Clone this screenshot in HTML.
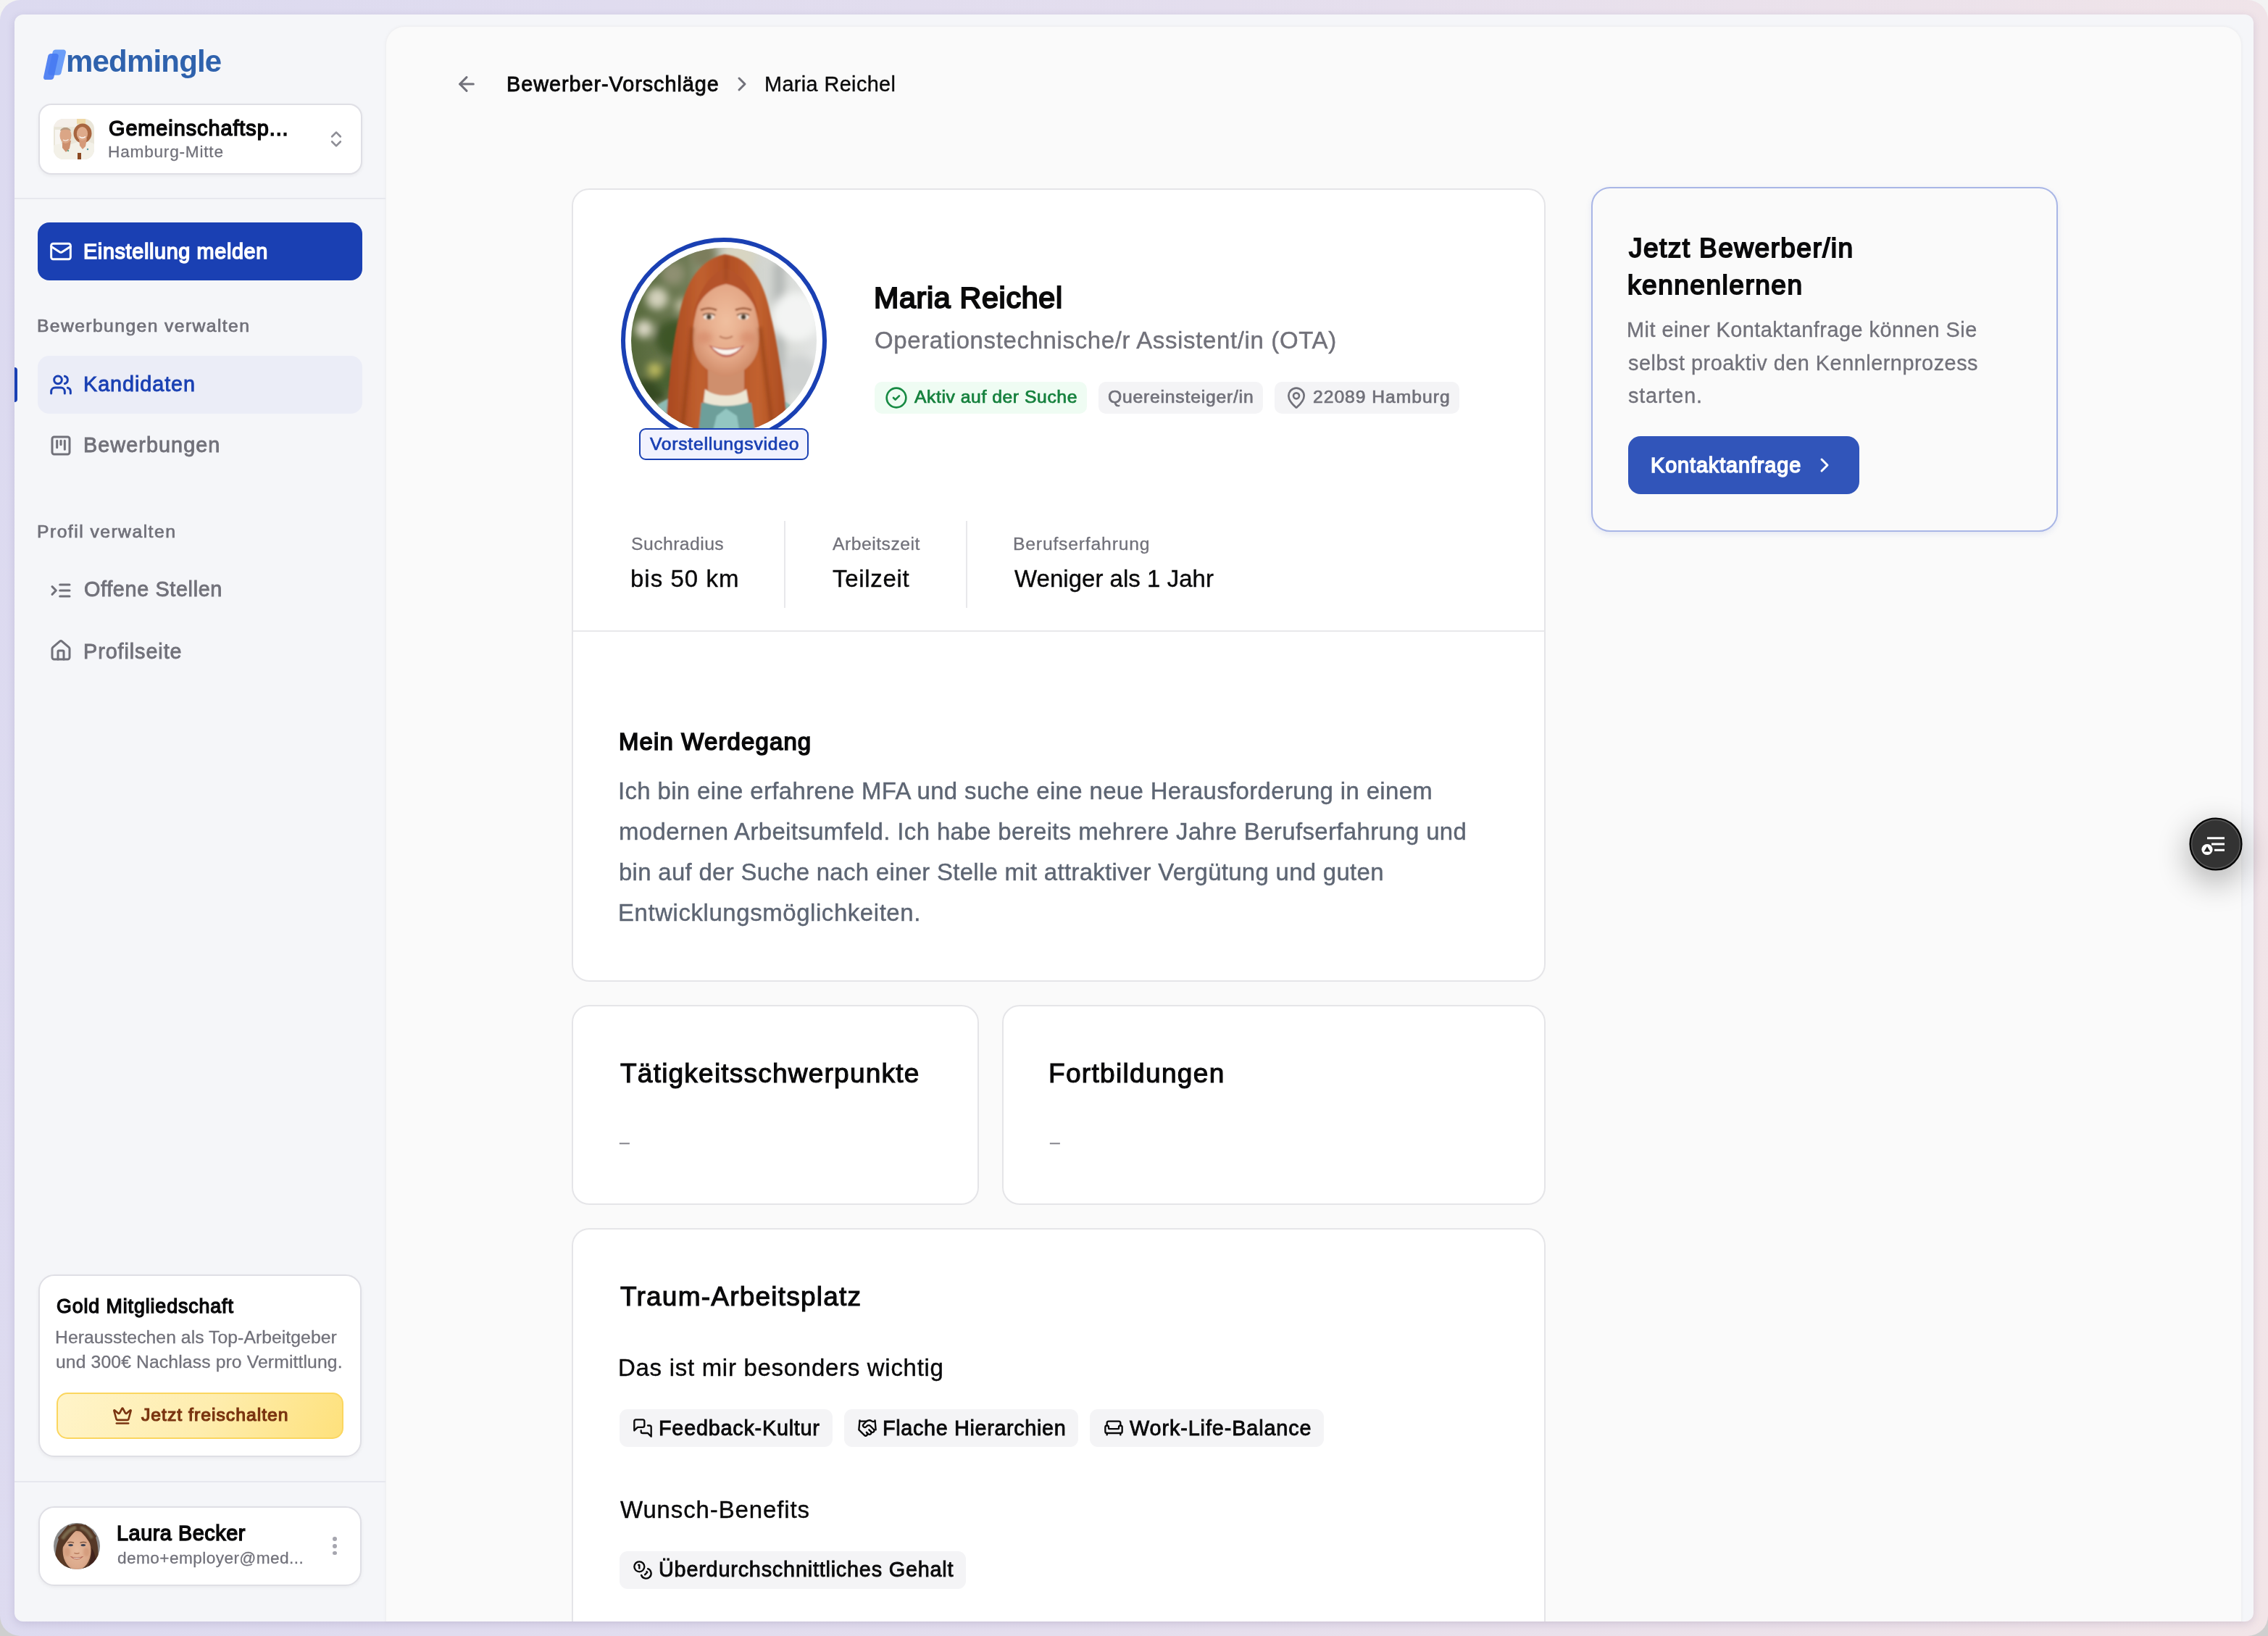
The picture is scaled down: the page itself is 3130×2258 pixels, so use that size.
<!DOCTYPE html><html lang="de"><head><meta charset="utf-8"><title>medmingle – Maria Reichel</title><style>
html,body{margin:0;padding:0}
html{overflow:hidden}
html{background:linear-gradient(180deg,#f3f3f3,#cfcfcf)}
body{width:3130px;height:2258px;position:relative;overflow:hidden;font-family:"Liberation Sans", Arial, sans-serif;
 background:linear-gradient(96deg,#dcdaf0 0%,#e4deee 50%,#f2e5e8 100%);border-radius:28px}
.b,.i,.t{position:absolute;box-sizing:border-box}
.t{white-space:nowrap;line-height:1;display:block;will-change:transform}
.i{display:block;overflow:visible}
</style></head><body>
<div class="b" style="left:20px;top:20px;width:3090px;height:2218px;background:#f5f6f9;border-radius:12px;box-shadow:0 3px 12px 0 rgba(60,50,110,.15);overflow:hidden"></div>
<div class="b" style="left:532px;top:36px;width:2562px;height:2202px;background:#fafafa;border-radius:26px 26px 0 0;box-shadow:0 0 5px rgba(0,0,0,.04);border:1px solid #f0f0f2;border-bottom:none"></div>
<svg class="i" style="left:58px;top:66px" width="36" height="48" viewBox="0 0 36 48"><path d="M19 2.500h10.500a3.500 3.500 0 0 1 3.400 4.300l-6.300 27.500a4.500 4.500 0 0 1-4.400 3.500H11.700a3.500 3.500 0 0 1-3.400-4.300L14.600 6a4.500 4.500 0 0 1 4.400-3.500z" fill="#6b9df8"/><path d="M12.500 8h7a3.300 3.300 0 0 1 3.200 4.100l-6.300 28.500a4.500 4.500 0 0 1-4.400 3.500H5.200a3.200 3.200 0 0 1-3.100-3.900L8.200 11.500a4.500 4.500 0 0 1 4.300-3.500z" fill="#4679f1" opacity=".92"/></svg>
<span class="t" style="left:90.6px;top:64.4px;font-size:42.00px;color:#2f62ad;font-weight:700;letter-spacing:-0.814px;">medmingle</span>
<div class="b" style="left:53px;top:143px;width:447px;height:98px;background:#fff;border:2px solid #dfdfe5;border-radius:18px;box-shadow:0 2px 5px rgba(0,0,0,.05)"></div>
<svg class="i" style="left:74px;top:164px" width="56" height="56" viewBox="0 0 56 56">
<defs><clipPath id="pc"><rect width="56" height="56" rx="14"/></clipPath><filter id="pb"><feGaussianBlur stdDeviation=".7"/></filter></defs>
<g clip-path="url(#pc)"><rect width="56" height="56" fill="#eae6d9"/>
<g filter="url(#pb)">
<rect x="0" y="0" width="32" height="11" fill="#f4efe9"/><rect x="2" y="15" width="8" height="22" fill="#f7f5f1"/><rect x="32" y="0" width="12" height="7" fill="#efd9a8"/>
<path d="M-2 58V38C4 34 12 33 19 37L30 33C38 30 50 30 58 36V58Z" fill="#f3f1e8"/>
<ellipse cx="40" cy="20" rx="12.500" ry="13.500" fill="#a8653f"/>
<path d="M35 27H46L44 38L40 42L36 37Z" fill="#d59a79"/>
<ellipse cx="39.500" cy="20.500" rx="7.600" ry="9.600" fill="#deaa8b"/>
<path d="M12 30H24L22 41L17 46L12 40Z" fill="#cc8f6e"/>
<ellipse cx="16.500" cy="23" rx="8" ry="11" fill="#dba686"/>
<path d="M9 17C10 11 22 10 24 17C20 14 13 14 9 17Z" fill="#b79a80"/>
<path d="M35.500 24.500Q39.500 28 44 24.500" stroke="#fff" stroke-width="1.400" fill="none"/>
<path d="M13 29Q17 31.500 20.500 28.500" stroke="#f6ece6" stroke-width="1.200" fill="none"/>
<rect x="33" y="47" width="5" height="10" fill="#8b4a20"/>
<circle cx="20" cy="44" r="1.200" fill="#6aa88a"/><circle cx="47" cy="42" r="1.200" fill="#5a9aa0"/>
</g></g></svg>
<span class="t" style="left:150.0px;top:163.0px;font-size:28.84px;color:#0a0a0b;-webkit-text-stroke:1.44px #0a0a0b;letter-spacing:0.956px;">Gemeinschaftsp...</span>
<span class="t" style="left:149.0px;top:197.5px;font-size:22.66px;color:#71717a;-webkit-text-stroke:0.27px #71717a;letter-spacing:0.764px;">Hamburg-Mitte</span>
<svg class="i" style="left:450px;top:178px" width="28" height="28" viewBox="0 0 24 24" fill="none" stroke="#8e8e96" stroke-width="2.25" stroke-linecap="round" stroke-linejoin="round"><path d="m7 15 5 5 5-5"/><path d="m7 9 5-5 5 5"/></svg>
<div class="b" style="left:20px;top:273px;width:512px;height:2px;background:#e7e8ee"></div>
<div class="b" style="left:52px;top:307px;width:448px;height:80px;background:#1a40b3;border-radius:16px"></div>
<svg class="i" style="left:68px;top:331px" width="32" height="32" viewBox="0 0 24 24" fill="none" stroke="#fff" stroke-width="2.2" stroke-linecap="round" stroke-linejoin="round"><rect width="20" height="16" x="2" y="4" rx="2"/><path d="m22 7-8.97 5.7a1.94 1.94 0 0 1-2.06 0L2 7"/></svg>
<span class="t" style="left:115.0px;top:333.1px;font-size:28.84px;color:#fff;-webkit-text-stroke:1.44px #fff;letter-spacing:0.630px;">Einstellung melden</span>
<span class="t" style="left:51.2px;top:437.9px;font-size:24.72px;color:#71717a;-webkit-text-stroke:0.74px #71717a;letter-spacing:1.384px;">Bewerbungen verwalten</span>
<div class="b" style="left:52px;top:491px;width:448px;height:80px;background:#ebedf7;border-radius:16px"></div>
<div class="b" style="left:20px;top:507px;width:4px;height:48px;background:#1a40b3;border-radius:0 4px 4px 0"></div>
<svg class="i" style="left:68px;top:515px" width="32" height="32" viewBox="0 0 24 24" fill="none" stroke="#1a40b3" stroke-width="2.25" stroke-linecap="round" stroke-linejoin="round"><path d="M16 21v-2a4 4 0 0 0-4-4H6a4 4 0 0 0-4 4v2"/><circle cx="9" cy="7" r="4"/><path d="M22 21v-2a4 4 0 0 0-3-3.87"/><path d="M16 3.13a4 4 0 0 1 0 7.75"/></svg>
<span class="t" style="left:114.7px;top:516.0px;font-size:28.84px;color:#1a40b3;-webkit-text-stroke:0.87px #1a40b3;letter-spacing:0.911px;">Kandidaten</span>
<svg class="i" style="left:68px;top:599px" width="32" height="32" viewBox="0 0 24 24" fill="none" stroke="#71717a" stroke-width="2.25" stroke-linecap="round" stroke-linejoin="round"><rect width="18" height="18" x="3" y="3" rx="2"/><path d="M8 7v7"/><path d="M12 7v4"/><path d="M16 7v9"/></svg>
<span class="t" style="left:114.7px;top:600.1px;font-size:28.84px;color:#71717a;-webkit-text-stroke:0.87px #71717a;letter-spacing:1.045px;">Bewerbungen</span>
<span class="t" style="left:50.8px;top:722.1px;font-size:24.72px;color:#71717a;-webkit-text-stroke:0.74px #71717a;letter-spacing:1.460px;">Profil verwalten</span>
<svg class="i" style="left:68px;top:798.6px" width="32" height="32" viewBox="0 0 24 24" fill="none" stroke="#71717a" stroke-width="2.25" stroke-linecap="round" stroke-linejoin="round"><path d="M21 12H11"/><path d="M21 18H11"/><path d="M21 6H11"/><path d="m3 8 4 4-4 4"/></svg>
<span class="t" style="left:115.8px;top:799.4px;font-size:28.84px;color:#71717a;-webkit-text-stroke:0.87px #71717a;letter-spacing:0.630px;">Offene Stellen</span>
<svg class="i" style="left:68px;top:882px" width="32" height="32" viewBox="0 0 24 24" fill="none" stroke="#71717a" stroke-width="2.25" stroke-linecap="round" stroke-linejoin="round"><path d="M15 21v-8a1 1 0 0 0-1-1h-4a1 1 0 0 0-1 1v8"/><path d="M3 10a2 2 0 0 1 .709-1.528l7-5.999a2 2 0 0 1 2.582 0l7 5.999A2 2 0 0 1 21 10v9a2 2 0 0 1-2 2H5a2 2 0 0 1-2-2z"/></svg>
<span class="t" style="left:114.8px;top:884.5px;font-size:28.84px;color:#71717a;-webkit-text-stroke:0.87px #71717a;letter-spacing:0.900px;">Profilseite</span>
<div class="b" style="left:53px;top:1759px;width:446px;height:252px;background:#fff;border:2px solid #dfdfe5;border-radius:22px;box-shadow:0 2px 5px rgba(0,0,0,.05)"></div>
<span class="t" style="left:77.6px;top:1790.2px;font-size:26.78px;color:#0a0a0b;-webkit-text-stroke:1.34px #0a0a0b;letter-spacing:0.904px;">Gold Mitgliedschaft</span>
<span class="t" style="left:76.4px;top:1833.6px;font-size:24.72px;color:#71717a;-webkit-text-stroke:0.30px #71717a;letter-spacing:0.053px;">Herausstechen als Top-Arbeitgeber</span>
<span class="t" style="left:76.8px;top:1867.8px;font-size:24.72px;color:#71717a;-webkit-text-stroke:0.30px #71717a;letter-spacing:0.119px;">und 300€ Nachlass pro Vermittlung.</span>
<div class="b" style="left:78px;top:1922px;width:396px;height:64px;background:linear-gradient(115deg,#fff4c9 0%,#feedae 52%,#fee17c 100%);border:2px solid #fbd65f;border-radius:15px"></div>
<svg class="i" style="left:155px;top:1940px" width="28" height="28" viewBox="0 0 24 24" fill="none" stroke="#7a3410" stroke-width="2.25" stroke-linecap="round" stroke-linejoin="round"><path d="M11.562 3.266a.5.5 0 0 1 .876 0L15.39 8.87a1 1 0 0 0 1.516.294L21.183 5.5a.5.5 0 0 1 .798.519l-2.834 10.246a1 1 0 0 1-.956.734H5.81a1 1 0 0 1-.957-.734L2.02 6.02a.5.5 0 0 1 .798-.519l4.276 3.664a1 1 0 0 0 1.516-.294z"/><path d="M5 21h14"/></svg>
<span class="t" style="left:195.2px;top:1941.4px;font-size:24.72px;color:#7a3410;-webkit-text-stroke:1.24px #7a3410;letter-spacing:1.004px;">Jetzt freischalten</span>
<div class="b" style="left:20px;top:2044px;width:512px;height:2px;background:#e7e8ee"></div>
<div class="b" style="left:53px;top:2079px;width:446px;height:110px;background:#fff;border:2px solid #dfdfe5;border-radius:22px;box-shadow:0 2px 5px rgba(0,0,0,.05)"></div>
<svg class="i" style="left:74px;top:2102px" width="64" height="64" viewBox="0 0 64 64">
<defs><clipPath id="lc"><circle cx="32" cy="32" r="32"/></clipPath><filter id="lb"><feGaussianBlur stdDeviation=".45"/></filter><filter id="lb2"><feGaussianBlur stdDeviation="1.300"/></filter>
<radialGradient id="lf" cx=".5" cy=".5" r=".62"><stop offset="0" stop-color="#e6b99c"/><stop offset=".7" stop-color="#dba98b"/><stop offset="1" stop-color="#c48a68"/></radialGradient></defs>
<g clip-path="url(#lc)"><rect width="64" height="64" fill="#8b8b8b"/>
<g filter="url(#lb)">
<path d="M3 64C0 36 6 12 24 3C34 -1 46 2 53 10C62 22 63 44 60 64Z" fill="#573826"/>
<ellipse cx="32" cy="38" rx="19.500" ry="27" fill="url(#lf)"/>
<path d="M33 8.500Q22 18 10.500 37L6 20L20 3Z" fill="#573826"/><path d="M33 8.500Q44 16 53.500 34L59 18L44 2Z" fill="#573826"/>
<path d="M12 36C12 46 14 56 20 64H8C6 54 8 42 12 36Z" fill="#5b3a27"/><path d="M52 34C53 46 50 56 45 64H58C60 52 57 40 52 34Z" fill="#41241a"/>
<path d="M19 27.200Q23.500 25.400 28 27.400" stroke="#7a5038" stroke-width="1.200" fill="none"/><path d="M36.500 27.400Q41 25.400 45.500 27.200" stroke="#7a5038" stroke-width="1.200" fill="none"/>
<ellipse cx="23.600" cy="30.600" rx="3.300" ry="1.700" fill="#3c4252"/><ellipse cx="40.800" cy="30.600" rx="3.300" ry="1.700" fill="#3c4252"/>
<path d="M28.500 41.300Q32 43.400 35.500 41.300" stroke="#b47658" stroke-width="1.500" fill="none"/>
<path d="M22.500 45.800Q32 49.300 41.500 45.800Q32 55 22.500 45.800Z" fill="#b05f4e"/><path d="M25.500 47.200Q32 49.400 38.500 47.200Q32 52 25.500 47.200Z" fill="#efe6da"/>
</g>
<g filter="url(#lb2)" opacity=".8"><path d="M12 22Q20 9 31 6" stroke="#857859" stroke-width="5" fill="none"/><path d="M37 6Q47 9 53 21" stroke="#7d7054" stroke-width="4.400" fill="none"/></g>
<g filter="url(#lb2)" opacity=".4"><ellipse cx="19" cy="40" rx="4" ry="6" fill="#c98866"/><ellipse cx="45" cy="40" rx="4" ry="6" fill="#c98866"/></g>
</g></svg>
<span class="t" style="left:161.0px;top:2102.4px;font-size:28.84px;color:#0a0a0b;-webkit-text-stroke:1.44px #0a0a0b;letter-spacing:0.539px;">Laura Becker</span>
<span class="t" style="left:161.8px;top:2139.3px;font-size:22.66px;color:#71717a;-webkit-text-stroke:0.27px #71717a;letter-spacing:0.405px;">demo+employer@med...</span>
<div class="b" style="left:459.1px;top:2121.4px;width:5.7999999999999545px;height:5.800000000000182px;background:#a6a6af;border-radius:50%"></div>
<div class="b" style="left:459.1px;top:2131.0px;width:5.7999999999999545px;height:5.800000000000182px;background:#a6a6af;border-radius:50%"></div>
<div class="b" style="left:459.1px;top:2140.5px;width:5.7999999999999545px;height:5.800000000000182px;background:#a6a6af;border-radius:50%"></div>
<svg class="i" style="left:628px;top:100px" width="32" height="32" viewBox="0 0 24 24" fill="none" stroke="#71717a" stroke-width="2.25" stroke-linecap="round" stroke-linejoin="round"><path d="m12 19-7-7 7-7"/><path d="M19 12H5"/></svg>
<span class="t" style="left:699.1px;top:102.0px;font-size:28.84px;color:#0a0a0b;-webkit-text-stroke:0.87px #0a0a0b;letter-spacing:0.953px;">Bewerber-Vorschläge</span>
<svg class="i" style="left:1008px;top:100px" width="32" height="32" viewBox="0 0 24 24" fill="none" stroke="#71717a" stroke-width="2.25" stroke-linecap="round" stroke-linejoin="round"><path d="m9 18 6-6-6-6"/></svg>
<span class="t" style="left:1054.8px;top:102.0px;font-size:28.84px;color:#0a0a0b;-webkit-text-stroke:0.35px #0a0a0b;letter-spacing:0.392px;">Maria Reichel</span>
<div class="b" style="left:789px;top:259.5px;width:1344px;height:1095.1px;background:#fff;border:2px solid #e5e5e8;border-radius:24px"></div>
<div class="b" style="left:857.3px;top:328.3px;width:284.0px;height:283.99999999999994px;border:6px solid #1a40b3;border-radius:50%;background:#fff"></div>
<svg class="i" style="left:871px;top:342px" width="256" height="256" viewBox="0 0 256 256">
<defs>
<clipPath id="mc"><circle cx="128" cy="128" r="128"/></clipPath>
<linearGradient id="mbg" x1="0" x2="1" y1="0" y2="0"><stop offset="0" stop-color="#55683a"/><stop offset=".3" stop-color="#6f7b55"/><stop offset=".52" stop-color="#c9ccc4"/><stop offset="1" stop-color="#e2e4e3"/></linearGradient>
<linearGradient id="mh" x1="0" x2="1" y1="0" y2="0"><stop offset="0" stop-color="#a9481f"/><stop offset=".28" stop-color="#c0602f"/><stop offset=".5" stop-color="#b24f25"/><stop offset=".75" stop-color="#c2622f"/><stop offset="1" stop-color="#a9491f"/></linearGradient>
<radialGradient id="mf" cx=".5" cy=".42" r=".62"><stop offset="0" stop-color="#f0bf9f"/><stop offset=".65" stop-color="#e3a685"/><stop offset="1" stop-color="#cc8663"/></radialGradient>
<filter id="b6"><feGaussianBlur stdDeviation="6"/></filter>
<filter id="b1"><feGaussianBlur stdDeviation="1.100"/></filter>
<filter id="b2"><feGaussianBlur stdDeviation="2.200"/></filter>
<filter id="b4" x="-60%" y="-60%" width="220%" height="220%"><feGaussianBlur stdDeviation="4.500"/></filter>
</defs>
<g clip-path="url(#mc)">
<rect width="256" height="256" fill="url(#mbg)"/>
<g filter="url(#b6)">
<circle cx="60" cy="125" r="26" fill="#3c5426"/><circle cx="22" cy="205" r="24" fill="#354a20"/><circle cx="50" cy="180" r="18" fill="#4a6230"/>
<circle cx="36" cy="70" r="15" fill="#d3d1bc"/><circle cx="18" cy="112" r="12" fill="#dcd8c6"/><circle cx="58" cy="36" r="16" fill="#8f9072"/>
<circle cx="32" cy="168" r="9" fill="#c9c563"/><circle cx="70" cy="80" r="10" fill="#bdbca0"/><circle cx="40" cy="225" r="10" fill="#9aa079"/>
<rect x="196" y="20" width="16" height="220" fill="#b4b8b6"/><circle cx="228" cy="95" r="34" fill="#f3f4f3"/><circle cx="232" cy="175" r="26" fill="#cfd2d1"/>
<circle cx="150" cy="12" r="22" fill="#d8d5c2"/><circle cx="100" cy="10" r="18" fill="#7c7d5c"/>
</g>
<g filter="url(#b1)">
<path d="M10 256C22 216 55 202 92 198L168 198C202 202 232 216 246 256Z" fill="#8dbbb4"/>
<path d="M48 256C50 200 57 130 66 95C73 58 88 18 129 9C170 13 186 58 193 95C202 130 212 200 217 256Z" fill="url(#mh)"/>
<path d="M106 160H156V210H106Z" fill="#cf8f6d"/>
<path d="M97 214L166 214L171 256L93 256Z" fill="#6d9f9a"/>
<path d="M118 232L131 222L146 232L150 256L112 256Z" fill="#93c6c1"/>
<path d="M102 195C116 207 146 207 159 195L162 213C146 220 117 220 100 213Z" fill="#ece6d4"/>
<path d="M131 46C112 48 95 62 89 92C85 108 84 122 86 136C90 161 110 176 131 178C152 176 172 161 176 136C178 122 177 108 173 92C167 62 150 48 131 46Z" fill="url(#mf)"/>
<path d="M131 28C112 34 92 56 84 100C92 72 108 54 131 50C154 54 170 72 178 100C170 56 150 34 131 28Z" fill="#b5532a"/>
<path d="M96 86Q107 81 118 86" stroke="#9a5634" stroke-width="2.500" fill="none"/><path d="M144 86Q155 81 166 86" stroke="#9a5634" stroke-width="2.500" fill="none"/>
<ellipse cx="107.400" cy="95.600" rx="7.500" ry="3.600" fill="#f1e4da"/><ellipse cx="155" cy="95.600" rx="7.500" ry="3.600" fill="#f1e4da"/>
<circle cx="107.400" cy="95.600" r="3.500" fill="#4d4030"/><circle cx="155" cy="95.600" r="3.500" fill="#4d4030"/>
<path d="M99 93Q107 88 116 93" stroke="#5a3a28" stroke-width="1.500" fill="none"/><path d="M146 93Q155 88 163 93" stroke="#5a3a28" stroke-width="1.500" fill="none"/>
<path d="M122 122Q131 128 140 122" stroke="#c07f60" stroke-width="2.500" fill="none"/>
<path d="M107 134Q131 144 157 134Q131 168 107 134Z" fill="#c2685a"/>
<path d="M111 136.500Q131 145 153 136.500Q131 159 111 136.500Z" fill="#fbf6f0"/>
</g>
<g filter="url(#b4)" opacity=".5"><ellipse cx="101" cy="124" rx="11" ry="9" fill="#d07f5e"/><ellipse cx="161" cy="124" rx="11" ry="9" fill="#d07f5e"/></g>
<g filter="url(#b2)" opacity=".55"><path d="M84 110C80 160 74 210 70 256" stroke="#8a3a17" stroke-width="5" fill="none"/><path d="M178 110C184 160 190 210 196 256" stroke="#8a3a17" stroke-width="5" fill="none"/><path d="M131 12V46" stroke="#8a3a17" stroke-width="2.500" fill="none"/></g>
</g></svg>
<div class="b" style="left:882px;top:591px;width:234px;height:44px;background:#f1f2fe;border:2px solid #1a40b3;border-radius:9px"></div>
<span class="t" style="left:897.3px;top:601.1px;font-size:24.72px;color:#1a40b3;-webkit-text-stroke:0.74px #1a40b3;letter-spacing:0.727px;">Vorstellungsvideo</span>
<span class="t" style="left:1205.7px;top:390.6px;font-size:41.20px;color:#0a0a0b;-webkit-text-stroke:2.06px #0a0a0b;letter-spacing:0.690px;">Maria Reichel</span>
<span class="t" style="left:1206.6px;top:453.9px;font-size:32.96px;color:#71717a;-webkit-text-stroke:0.40px #71717a;letter-spacing:0.653px;">Operationstechnische/r Assistent/in (OTA)</span>
<div class="b" style="left:1207px;top:527px;width:293px;height:44px;background:#effcf3;border-radius:10px"></div>
<svg class="i" style="left:1221px;top:533px" width="32" height="32" viewBox="0 0 24 24" fill="none" stroke="#178a43" stroke-width="2" stroke-linecap="round" stroke-linejoin="round"><circle cx="12" cy="12" r="10"/><path d="m9 12 2 2 4-4"/></svg>
<span class="t" style="left:1262.3px;top:535.9px;font-size:24.72px;color:#15803d;-webkit-text-stroke:0.74px #15803d;letter-spacing:0.558px;">Aktiv auf der Suche</span>
<div class="b" style="left:1516px;top:527px;width:227px;height:44px;background:#f4f4f6;border-radius:10px"></div>
<span class="t" style="left:1529.2px;top:535.9px;font-size:24.72px;color:#71717a;-webkit-text-stroke:0.74px #71717a;letter-spacing:0.774px;">Quereinsteiger/in</span>
<div class="b" style="left:1759px;top:527px;width:255px;height:44px;background:#f4f4f6;border-radius:10px"></div>
<svg class="i" style="left:1773px;top:533px" width="32" height="32" viewBox="0 0 24 24" fill="none" stroke="#71717a" stroke-width="2" stroke-linecap="round" stroke-linejoin="round"><path d="M20 10c0 4.993-5.539 10.193-7.399 11.799a1 1 0 0 1-1.202 0C9.539 20.193 4 14.993 4 10a8 8 0 0 1 16 0"/><circle cx="12" cy="10" r="3"/></svg>
<span class="t" style="left:1812.1px;top:535.9px;font-size:24.72px;color:#71717a;-webkit-text-stroke:0.74px #71717a;letter-spacing:0.951px;">22089 Hamburg</span>
<span class="t" style="left:870.7px;top:738.9px;font-size:24.72px;color:#71717a;-webkit-text-stroke:0.30px #71717a;letter-spacing:0.450px;">Suchradius</span>
<span class="t" style="left:869.8px;top:782.7px;font-size:32.96px;color:#0a0a0b;-webkit-text-stroke:0.40px #0a0a0b;letter-spacing:1.046px;">bis 50 km</span>
<div class="b" style="left:1082px;top:719px;width:2px;height:120px;background:#e8e8eb"></div>
<span class="t" style="left:1148.7px;top:738.9px;font-size:24.72px;color:#71717a;-webkit-text-stroke:0.30px #71717a;letter-spacing:0.493px;">Arbeitszeit</span>
<span class="t" style="left:1149.0px;top:782.7px;font-size:32.96px;color:#0a0a0b;-webkit-text-stroke:0.40px #0a0a0b;letter-spacing:0.693px;">Teilzeit</span>
<div class="b" style="left:1333px;top:719px;width:2px;height:120px;background:#e8e8eb"></div>
<span class="t" style="left:1397.6px;top:738.9px;font-size:24.72px;color:#71717a;-webkit-text-stroke:0.30px #71717a;letter-spacing:0.804px;">Berufserfahrung</span>
<span class="t" style="left:1399.6px;top:782.7px;font-size:32.96px;color:#0a0a0b;-webkit-text-stroke:0.40px #0a0a0b;letter-spacing:0.044px;">Weniger als 1 Jahr</span>
<div class="b" style="left:791px;top:870px;width:1340px;height:2px;background:#e8e8eb"></div>
<span class="t" style="left:853.9px;top:1007.9px;font-size:32.96px;color:#0a0a0b;-webkit-text-stroke:1.65px #0a0a0b;letter-spacing:1.140px;">Mein Werdegang</span>
<span class="t" style="left:853.0px;top:1076.1px;font-size:32.96px;color:#5d6573;-webkit-text-stroke:0.40px #5d6573;letter-spacing:0.352px;">Ich bin eine erfahrene MFA und suche eine neue Herausforderung in einem</span>
<span class="t" style="left:853.8px;top:1132.1px;font-size:32.96px;color:#5d6573;-webkit-text-stroke:0.40px #5d6573;letter-spacing:0.368px;">modernen Arbeitsumfeld. Ich habe bereits mehrere Jahre Berufserfahrung und</span>
<span class="t" style="left:853.9px;top:1188.1px;font-size:32.96px;color:#5d6573;-webkit-text-stroke:0.40px #5d6573;letter-spacing:0.292px;">bin auf der Suche nach einer Stelle mit attraktiver Vergütung und guten</span>
<span class="t" style="left:853.3px;top:1244.1px;font-size:32.96px;color:#5d6573;-webkit-text-stroke:0.40px #5d6573;letter-spacing:0.575px;">Entwicklungsmöglichkeiten.</span>
<div class="b" style="left:789px;top:1387px;width:562.4000000000001px;height:276px;background:#fff;border:2px solid #e5e5e8;border-radius:24px"></div>
<span class="t" style="left:855.5px;top:1462.6px;font-size:37.08px;color:#0a0a0b;-webkit-text-stroke:1.11px #0a0a0b;letter-spacing:1.186px;">Tätigkeitsschwerpunkte</span>
<span class="t" style="left:855.0px;top:1563.9px;font-size:24.72px;color:#85858d;-webkit-text-stroke:0.30px #85858d;">–</span>
<div class="b" style="left:1382.9px;top:1387px;width:750.0999999999999px;height:276px;background:#fff;border:2px solid #e5e5e8;border-radius:24px"></div>
<span class="t" style="left:1447.0px;top:1462.6px;font-size:37.08px;color:#0a0a0b;-webkit-text-stroke:1.11px #0a0a0b;letter-spacing:1.299px;">Fortbildungen</span>
<span class="t" style="left:1449.0px;top:1563.9px;font-size:24.72px;color:#85858d;-webkit-text-stroke:0.30px #85858d;">–</span>
<div class="b" style="left:789px;top:1695px;width:1344px;height:543px;background:#fff;border:2px solid #e5e5e8;border-radius:24px;border-bottom:none;border-radius:24px 24px 0 0"></div>
<span class="t" style="left:855.5px;top:1770.8px;font-size:37.08px;color:#0a0a0b;-webkit-text-stroke:1.11px #0a0a0b;letter-spacing:1.191px;">Traum-Arbeitsplatz</span>
<span class="t" style="left:853.3px;top:1872.0px;font-size:32.96px;color:#0a0a0b;-webkit-text-stroke:0.40px #0a0a0b;letter-spacing:0.728px;">Das ist mir besonders wichtig</span>
<div class="b" style="left:855px;top:1945px;width:294px;height:52px;background:#f4f4f6;border-radius:11px"></div>
<svg class="i" style="left:873px;top:1956.7px" width="28" height="28" viewBox="0 0 24 24" fill="none" stroke="#0a0a0b" stroke-width="2" stroke-linecap="round" stroke-linejoin="round"><path d="M14 9a2 2 0 0 1-2 2H6l-4 4V4a2 2 0 0 1 2-2h8a2 2 0 0 1 2 2z"/><path d="M18 9h2a2 2 0 0 1 2 2v11l-4-4h-6a2 2 0 0 1-2-2v-1"/></svg>
<span class="t" style="left:908.6px;top:1956.8px;font-size:28.84px;color:#0a0a0b;-webkit-text-stroke:0.87px #0a0a0b;letter-spacing:0.747px;">Feedback-Kultur</span>
<div class="b" style="left:1164.8px;top:1945px;width:323.20000000000005px;height:52px;background:#f4f4f6;border-radius:11px"></div>
<svg class="i" style="left:1182.7px;top:1956.7px" width="28" height="28" viewBox="0 0 24 24" fill="none" stroke="#0a0a0b" stroke-width="2" stroke-linecap="round" stroke-linejoin="round"><path d="m11 17 2 2a1 1 0 1 0 3-3"/><path d="m14 14 2.5 2.5a1 1 0 1 0 3-3l-3.88-3.88a3 3 0 0 0-4.24 0l-.88.88a1 1 0 1 1-3-3l2.81-2.81a5.79 5.79 0 0 1 7.06-.87l.47.28a2 2 0 0 0 1.42.25L21 4"/><path d="m21 3 1 11h-2"/><path d="M3 3 2 14l6.500 6.500a1 1 0 1 0 3-3"/><path d="M3 4h8"/></svg>
<span class="t" style="left:1218.1px;top:1956.8px;font-size:28.84px;color:#0a0a0b;-webkit-text-stroke:0.87px #0a0a0b;letter-spacing:0.636px;">Flache Hierarchien</span>
<div class="b" style="left:1504px;top:1945px;width:323px;height:52px;background:#f4f4f6;border-radius:11px"></div>
<svg class="i" style="left:1522.6px;top:1956.7px" width="28" height="28" viewBox="0 0 24 24" fill="none" stroke="#0a0a0b" stroke-width="2" stroke-linecap="round" stroke-linejoin="round"><path d="M20 9V6a2 2 0 0 0-2-2H6a2 2 0 0 0-2 2v3"/><path d="M2 16a2 2 0 0 0 2 2h16a2 2 0 0 0 2-2v-5a2 2 0 0 0-4 0v1.500a.5.5 0 0 1-.5.5h-11a.5.5 0 0 1-.5-.5V11a2 2 0 0 0-4 0z"/><path d="M4 18v2"/><path d="M20 18v2"/></svg>
<span class="t" style="left:1559.3px;top:1956.8px;font-size:28.84px;color:#0a0a0b;-webkit-text-stroke:0.87px #0a0a0b;letter-spacing:0.872px;">Work-Life-Balance</span>
<span class="t" style="left:855.9px;top:2067.7px;font-size:32.96px;color:#0a0a0b;-webkit-text-stroke:0.40px #0a0a0b;letter-spacing:0.890px;">Wunsch-Benefits</span>
<div class="b" style="left:855px;top:2141px;width:478px;height:52px;background:#f4f4f6;border-radius:11px"></div>
<svg class="i" style="left:873px;top:2152.5px" width="28" height="28" viewBox="0 0 24 24" fill="none" stroke="#0a0a0b" stroke-width="2" stroke-linecap="round" stroke-linejoin="round"><circle cx="8" cy="8" r="6"/><path d="M18.090 10.370A6 6 0 1 1 10.340 18"/><path d="M7 6h1v4"/><path d="m16.710 13.880.7.710-2.820 2.820"/></svg>
<span class="t" style="left:908.7px;top:2152.2px;font-size:28.84px;color:#0a0a0b;-webkit-text-stroke:0.87px #0a0a0b;letter-spacing:0.785px;">Überdurchschnittliches Gehalt</span>
<div class="b" style="left:2195.5px;top:257.5px;width:644.0px;height:476.0px;background:#fafafa;border:2px solid #a9b6e6;border-radius:26px;box-shadow:0 3px 8px rgba(40,70,180,.10)"></div>
<span class="t" style="left:2247.7px;top:324.1px;font-size:37.08px;color:#0a0a0b;-webkit-text-stroke:1.85px #0a0a0b;letter-spacing:1.418px;">Jetzt Bewerber/in</span>
<span class="t" style="left:2245.8px;top:374.5px;font-size:37.08px;color:#0a0a0b;-webkit-text-stroke:1.85px #0a0a0b;letter-spacing:1.485px;">kennenlernen</span>
<span class="t" style="left:2245.2px;top:441.1px;font-size:28.84px;color:#71717a;-webkit-text-stroke:0.35px #71717a;letter-spacing:0.498px;">Mit einer Kontaktanfrage können Sie</span>
<span class="t" style="left:2246.8px;top:486.6px;font-size:28.84px;color:#71717a;-webkit-text-stroke:0.35px #71717a;letter-spacing:0.523px;">selbst proaktiv den Kennlernprozess</span>
<span class="t" style="left:2246.8px;top:532.1px;font-size:28.84px;color:#71717a;-webkit-text-stroke:0.35px #71717a;letter-spacing:0.848px;">starten.</span>
<div class="b" style="left:2247px;top:602px;width:319px;height:80px;background:#3155ba;border-radius:17px"></div>
<span class="t" style="left:2278.0px;top:628.4px;font-size:28.84px;color:#fff;-webkit-text-stroke:1.44px #fff;letter-spacing:0.897px;">Kontaktanfrage</span>
<svg class="i" style="left:2502px;top:626px" width="32" height="32" viewBox="0 0 24 24" fill="none" stroke="#fff" stroke-width="2.2" stroke-linecap="round" stroke-linejoin="round"><path d="m9 18 6-6-6-6"/></svg>
<svg class="i" style="left:2962px;top:1069px" width="192" height="192" viewBox="-96 -96 192 192"><defs><filter id="fs" x="-100%" y="-100%" width="300%" height="300%"><feGaussianBlur stdDeviation="22"/></filter></defs><circle cx="0" cy="14" r="40" fill="#000" opacity=".28" filter="url(#fs)"/><circle r="35.500" fill="#333" stroke="#050505" stroke-width="2.200"/><circle r="33.300" fill="none" stroke="#5a5a5a" stroke-width="1.200"/><g stroke="#fff" stroke-width="3" stroke-linecap="butt"><path d="M-12-8.200H12"/><path d="M-6 0H12"/><path d="M-2 8.300H12"/></g><circle cx="-12" cy="7.500" r="7.600" fill="#fff"/><path d="M-12 3.200l4.300 7.300h-8.600z" fill="#222"/></svg>
</body></html>
